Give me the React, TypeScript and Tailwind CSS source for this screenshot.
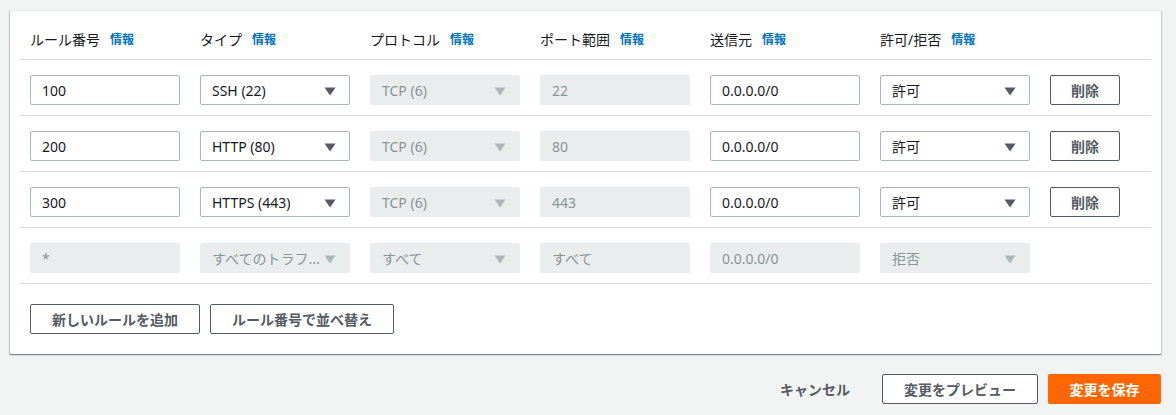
import React from "react";

type Rule = {
  num: string;
  type: string;
  protocol: string;
  port: string;
  source: string;
  action: string;
};

const rules: Rule[] = [
  { num: "100", type: "SSH (22)", protocol: "TCP (6)", port: "22", source: "0.0.0.0/0", action: "許可" },
  { num: "200", type: "HTTP (80)", protocol: "TCP (6)", port: "80", source: "0.0.0.0/0", action: "許可" },
  { num: "300", type: "HTTPS (443)", protocol: "TCP (6)", port: "443", source: "0.0.0.0/0", action: "許可" },
];

const headers = ["ルール番号", "タイプ", "プロトコル", "ポート範囲", "送信元", "許可/拒否"];

const Caret = ({ disabled }: { disabled?: boolean }) => (
  <svg
    width="12"
    height="9"
    viewBox="0 0 12 9"
    className={`absolute right-[13px] top-[11px] ${disabled ? "text-[#aab7b8]" : "text-[#545b64]"}`}
  >
    <path d="M0.5 0.5 H11.5 L6 8.5 Z" fill="currentColor" />
  </svg>
);

function TextField({ value, disabled }: { value: string; disabled?: boolean }) {
  return (
    <div
      className={`h-[30px] w-[150px] flex items-center px-[11px] text-[14px] rounded-[2px] border ${
        disabled
          ? "bg-[#eaeded] border-[#eaeded] text-[#879596]"
          : "bg-white border-[#aab7b8] text-[#16191f]"
      }`}
    >
      {value}
    </div>
  );
}

function SelectField({ value, disabled }: { value: string; disabled?: boolean }) {
  return (
    <div
      className={`relative h-[30px] w-[150px] flex items-center pl-[11px] pr-[26px] text-[14px] rounded-[2px] border ${
        disabled
          ? "bg-[#eaeded] border-[#eaeded] text-[#879596]"
          : "bg-white border-[#aab7b8] text-[#16191f]"
      }`}
    >
      <span className="whitespace-nowrap">{value}</span>
      <Caret disabled={disabled} />
    </div>
  );
}

export default function App() {
  return (
    <div
      className="min-h-[415px] w-[1176px] bg-[#f2f3f3] pt-[10px] pl-[10px]"
      style={{ fontFamily: '"Noto Sans", "Noto Sans CJK JP", sans-serif' }}
    >
      <div className="w-[1151px] bg-white border-t border-[#eaeded] shadow-[0_1px_1px_0_rgba(0,28,36,0.3),1px_1px_1px_0_rgba(0,28,36,0.15),-1px_1px_1px_0_rgba(0,28,36,0.15)] px-[10px]">
        <div className="h-[49px] flex items-end gap-[20px] pl-[10px] pb-[9px] border-b border-[#d5dbdb]">
          {headers.map((h) => (
            <div key={h} className="w-[150px] flex items-center text-[14px] leading-[20px] text-[#16191f]">
              {h}
              <span className="ml-[10px] text-[12px] font-bold text-[#0073bb]">情報</span>
            </div>
          ))}
        </div>

        {rules.map((r) => (
          <div key={r.num} className="flex gap-[20px] pl-[10px] pt-[15px] pb-[10px] border-b border-[#d5dbdb]">
            <TextField value={r.num} />
            <SelectField value={r.type} />
            <SelectField value={r.protocol} disabled />
            <TextField value={r.port} disabled />
            <TextField value={r.source} />
            <SelectField value={r.action} />
            <button className="h-[30px] w-[70px] border border-[#545b64] rounded-[2px] bg-white text-[14px] font-semibold text-[#545b64]">
              削除
            </button>
          </div>
        ))}

        <div className="flex gap-[20px] pl-[10px] pt-[15px] pb-[10px] border-b border-[#d5dbdb]">
          <TextField value="*" disabled />
          <SelectField value="すべてのトラフ..." disabled />
          <SelectField value="すべて" disabled />
          <TextField value="すべて" disabled />
          <TextField value="0.0.0.0/0" disabled />
          <SelectField value="拒否" disabled />
        </div>

        <div className="flex gap-[10px] pl-[10px] pt-[20px] pb-[20px]">
          <button className="h-[30px] w-[170px] border border-[#545b64] rounded-[2px] bg-white text-[14px] font-bold text-[#545b64]">
            新しいルールを追加
          </button>
          <button className="h-[30px] w-[184px] border border-[#545b64] rounded-[2px] bg-white text-[14px] font-bold text-[#545b64]">
            ルール番号で並べ替え
          </button>
        </div>
      </div>

      <div className="w-[1151px] flex justify-end items-center mt-[20px]">
        <button className="h-[30px] px-[20px] text-[14px] font-bold text-[#545b64] mr-[12px]">
          キャンセル
        </button>
        <button className="h-[30px] w-[156px] border border-[#545b64] rounded-[2px] bg-white text-[14px] font-bold text-[#545b64]">
          変更をプレビュー
        </button>
        <button className="ml-[10px] h-[30px] w-[113px] border border-[#ff6600] rounded-[2px] bg-[#ff6600] text-[14px] font-bold text-white">
          変更を保存
        </button>
      </div>
    </div>
  );
}
